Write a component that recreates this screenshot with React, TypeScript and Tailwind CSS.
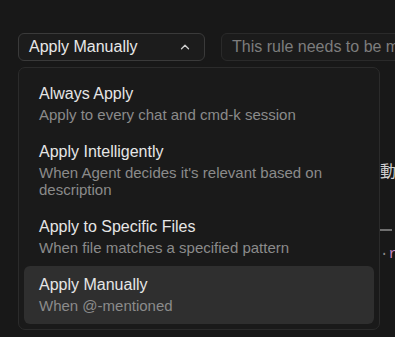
import { ChevronUp } from "lucide-react";

const options = [
  { title: "Always Apply", desc: "Apply to every chat and cmd-k session" },
  {
    title: "Apply Intelligently",
    desc: "When Agent decides it's relevant based on description",
  },
  { title: "Apply to Specific Files", desc: "When file matches a specified pattern" },
  { title: "Apply Manually", desc: "When @-mentioned" },
];

const App = () => {
  const selected = "Apply Manually";

  return (
    <div
      className="relative h-[337px] w-[395px] overflow-hidden bg-[#181818] text-[#e4e4e4]"
      style={{ fontFamily: '"Liberation Sans", Arial, "Noto Sans CJK JP", sans-serif' }}
    >
      <div className="flex gap-[16px] pl-[18px] pt-[33px]">
        <button className="flex h-[28px] w-[187px] shrink-0 items-center justify-between rounded-[6px] border border-[#3a3a3a] bg-[#1c1c1c] pl-[10px] pr-[12px] text-[16px] text-[#e8e8e8]">
          {selected}
          <ChevronUp size={14} strokeWidth={2.25} className="text-[#cfcfcf]" />
        </button>
        <div className="flex h-[28px] w-[240px] shrink-0 items-center rounded-[6px] border border-[#2a2a2a] bg-[#1b1b1b] pl-[10px] text-[16px] whitespace-nowrap text-[#7d7d7d]">
          This rule needs to be mentioned
        </div>
      </div>

      {/* editor content underneath the menu */}
      <div className="ml-[380px] flex flex-col pt-[101px]">
        <div className="text-[16px] leading-[20px] whitespace-nowrap text-[#d0d0d0]">動</div>
        <div className="mt-[47px] h-[2px] w-[12px] bg-[#6f6f6f]" />
        <div className="mt-[14px] flex items-center font-['Liberation_Mono'] text-[14px] leading-[18px]">
          <span className="text-[#8a8a8a]">·</span>
          <span className="text-[#c586c0]">ru</span>
        </div>
      </div>

      <div className="absolute left-[18px] top-[67px] w-[362px] rounded-[7px] border border-[#2b2b2b] bg-[#1a1a1a] px-[5px] pt-[7px] pb-[5px]">
        {options.map((o) => (
          <div
            key={o.title}
            className={`rounded-[6px] px-[15px] pt-[9px] pb-[10px] ${
              o.title === selected ? "bg-[#2f2f2f]" : ""
            }`}
          >
            <div className="text-[16px] leading-[20px] text-[#e6e6e6]">{o.title}</div>
            <div className="mt-[2px] text-[15px] leading-[17px] text-[#8b8b8b]">{o.desc}</div>
          </div>
        ))}
      </div>
    </div>
  );
};

export default App;
